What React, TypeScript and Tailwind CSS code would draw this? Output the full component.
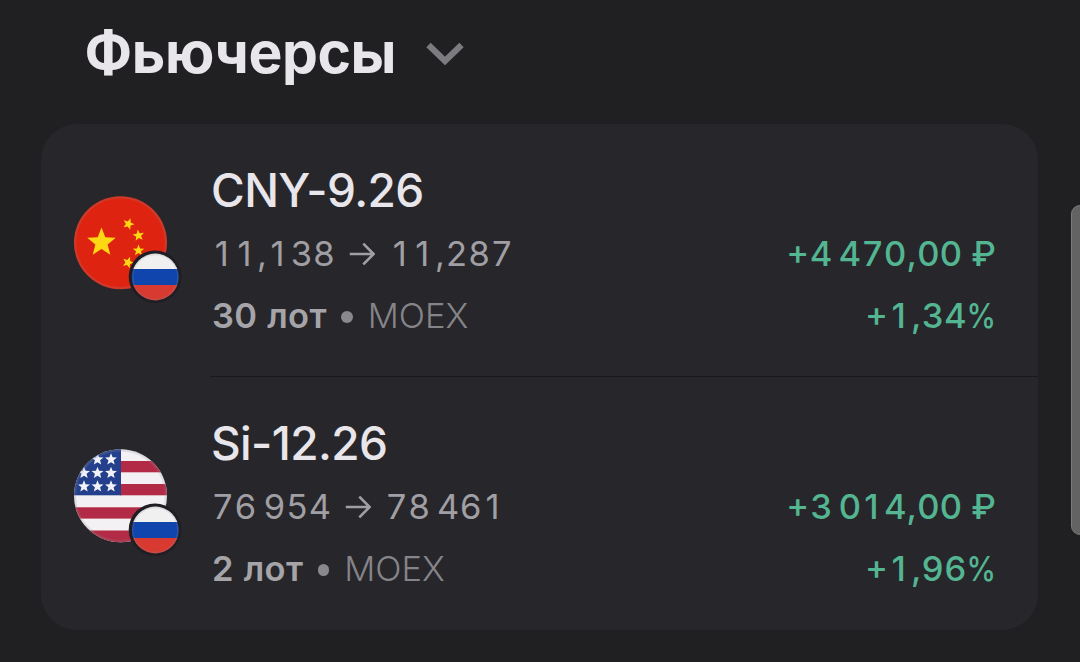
type FlagName = 'cn' | 'us'

interface Future {
    flag: FlagName
    name: string
    from: string
    to: string
    lots: string
    profit: string
    percent: string
}

const futures: Future[] = [
    { flag: 'cn', name: 'CNY-9.26', from: '11,138', to: '11,287', lots: '30 лот', profit: '+4\u2009470,00 ₽', percent: '+1,34%' },
    { flag: 'us', name: 'Si-12.26', from: '76\u2009954', to: '78\u2009461', lots: '2 лот', profit: '+3\u2009014,00 ₽', percent: '+1,96%' },
]

function starPoints(cx: number, cy: number, r: number, turn = 0) {
    return Array.from({ length: 10 }, (_, i) => {
        const radius = i % 2 ? r * 0.43 : r
        const angle = ((i * 36 - 90 + turn) * Math.PI) / 180
        return `${(cx + radius * Math.cos(angle)).toFixed(2)},${(cy + radius * Math.sin(angle)).toFixed(2)}`
    }).join(' ')
}

function ChinaFlag() {
    return (
        <>
            <rect width="94" height="94" fill="#de2410" />
            <g fill="#ffd814">
                <polygon points={starPoints(27.5, 46.5, 15)} />
                <polygon points={starPoints(54.5, 28, 6, 20)} />
                <polygon points={starPoints(64.5, 39.5, 6, -8)} />
                <polygon points={starPoints(64.5, 54.5, 6, 0)} />
                <polygon points={starPoints(54, 66.5, 6, 20)} />
            </g>
        </>
    )
}

const usStars = [[23.5, 10.5], [37, 10.5], [10, 24], [23.5, 24], [37, 24], [10, 37.5], [23.5, 37.5], [37, 37.5]]

function UsaFlag() {
    return (
        <>
            <rect width="94" height="94" fill="#f3f1f3" />
            <g fill="#b22a45">
                <rect x="46" y="12" width="48" height="11.3" />
                <rect x="46" y="35" width="48" height="11.3" />
                <rect y="58.3" width="94" height="11.3" />
                <rect y="81.5" width="94" height="13" />
            </g>
            <rect width="47" height="46.3" fill="#243f8c" />
            <g fill="#f0f2f8">
                {usStars.map(([x, y]) => <polygon key={`${x}-${y}`} points={starPoints(x, y, 6.3)} />)}
            </g>
        </>
    )
}

function FlagIcon({ flag }: { flag: FlagName }) {
    return (
        <svg className="block shrink-0" width="108" height="108" viewBox="0 0 108 108">
            <defs>
                <clipPath id={`${flag}-main`}><circle cx="46.5" cy="46.7" r="46.5" /></clipPath>
                <clipPath id={`${flag}-badge`}><circle cx="81.3" cy="81" r="23.4" /></clipPath>
            </defs>
            <g clipPath={`url(#${flag}-main)`}>
                {flag === 'cn' ? <ChinaFlag /> : <UsaFlag />}
            </g>
            <circle cx="46.5" cy="46.7" r="45.4" fill="none" stroke="#8f8f98" strokeOpacity="0.2" strokeWidth="2.2" />
            <circle cx="81" cy="80.7" r="26.3" fill="#1f1e24" />
            <g clipPath={`url(#${flag}-badge)`}>
                <rect x="57" y="57" width="49" height="16" fill="#f1f0f1" />
                <rect x="57" y="73" width="49" height="16" fill="#0f45ad" />
                <rect x="57" y="89" width="49" height="16" fill="#d83a32" />
            </g>
            <circle cx="81.3" cy="81" r="22.6" fill="none" stroke="#8f8f98" strokeOpacity="0.2" strokeWidth="1.6" />
        </svg>
    )
}

function Arrow() {
    return (
        <svg className="mx-[14px] mt-px shrink-0" width="26" height="24" viewBox="0 0 26 24" fill="none" stroke="#a09fa4" strokeWidth="2.6">
            <path d="M0.8 12H24.8M14.3 1.7L24.6 12L14.3 22.3" />
        </svg>
    )
}

const charStyles: Record<string, string> = {
    ',': 'w-[10.4px]',
    '\u2009': 'w-[6.2px]',
    ' ': 'w-[8px]',
    '₽': 'w-[26.7px]',
    '%': 'w-[30.3px]',
    '+': 'w-[22.7px] -translate-y-[2px] pr-[1px]',
    '1': 'w-[22.7px] pr-[2px]',
}

// every digit takes a cell of the same width, so the columns line up
function Digits({ value }: { value: string }) {
    return (
        <span className="inline-flex whitespace-pre">
            {value.split('').map((char, i) => (
                <span key={i} className={`flex justify-center ${charStyles[char] ?? 'w-[22.7px]'}`}>
                    {char === '%' ? <span className="-ml-px scale-x-[0.86]">{char}</span> : char}
                </span>
            ))}
        </span>
    )
}

function FutureRow({ future }: { future: Future }) {
    return (
        <div className="flex h-[253px] pl-[33px]">
            <div className="pt-[72px]">
                <FlagIcon flag={future.flag} />
            </div>
            <div className="ml-[28px] flex flex-1 justify-between border-b border-[#19191b] pt-[36px] pr-[41px] pl-[2px] text-[34.5px] whitespace-nowrap group-last:border-0">
                <div>
                    <div className="h-[62px] -ml-px text-[46px] leading-[60px] font-medium tracking-[-0.6px] text-[#e8e6eb]">{future.name}</div>
                    <div className="-ml-[0.5px] flex h-[63px] items-center leading-[63px] text-[#a09fa4]">
                        <Digits value={future.from} />
                        <Arrow />
                        <Digits value={future.to} />
                    </div>
                    <div className="flex h-[62px] items-center leading-[62px]">
                        <span className="font-semibold tracking-[0.3px] text-[#a5a4a9] [word-spacing:1px]">{future.lots}</span>
                        <span className="mt-[2px] mr-[15px] ml-[14.5px] size-[11.5px] rounded-full bg-[#89888d]" />
                        <span className="font-light text-[#858489]">MOEX</span>
                    </div>
                </div>
                <div className="pt-[62px] text-right font-medium text-[#53b591]">
                    <div className="h-[63px] leading-[63px]"><Digits value={future.profit} /></div>
                    <div className="h-[62px] leading-[62px]"><Digits value={future.percent} /></div>
                </div>
            </div>
        </div>
    )
}

export default function App() {
    return (
        <div className="relative h-[662px] w-[1080px] overflow-hidden bg-[#202022] font-['Inter',sans-serif]">
            <div className="flex h-[124px] items-start pl-[84.5px]">
                <h1 className="h-[104px] w-[313px] text-[57px] leading-[105px] font-bold tracking-[-0.4px] text-[#e8e6eb]">Фьючерсы</h1>
                <svg className="mt-[42px] ml-[28.5px]" width="38" height="26" viewBox="0 0 38 26" fill="none" stroke="#7c7b80" strokeWidth="6.2">
                    <path d="M2.5 3L19 19L35.5 3" />
                </svg>
            </div>
            <div className="ml-[41px] h-[506px] w-[997px] overflow-hidden rounded-[36px] bg-[#27262b]">
                {futures.map((future) => (
                    <div key={future.name} className="group">
                        <FutureRow future={future} />
                    </div>
                ))}
            </div>
            <div className="absolute top-[205px] left-[1071px] h-[330px] w-[20px] rounded-[9px] border border-[#7b7b7b] bg-[#636363]" />
        </div>
    )
}
